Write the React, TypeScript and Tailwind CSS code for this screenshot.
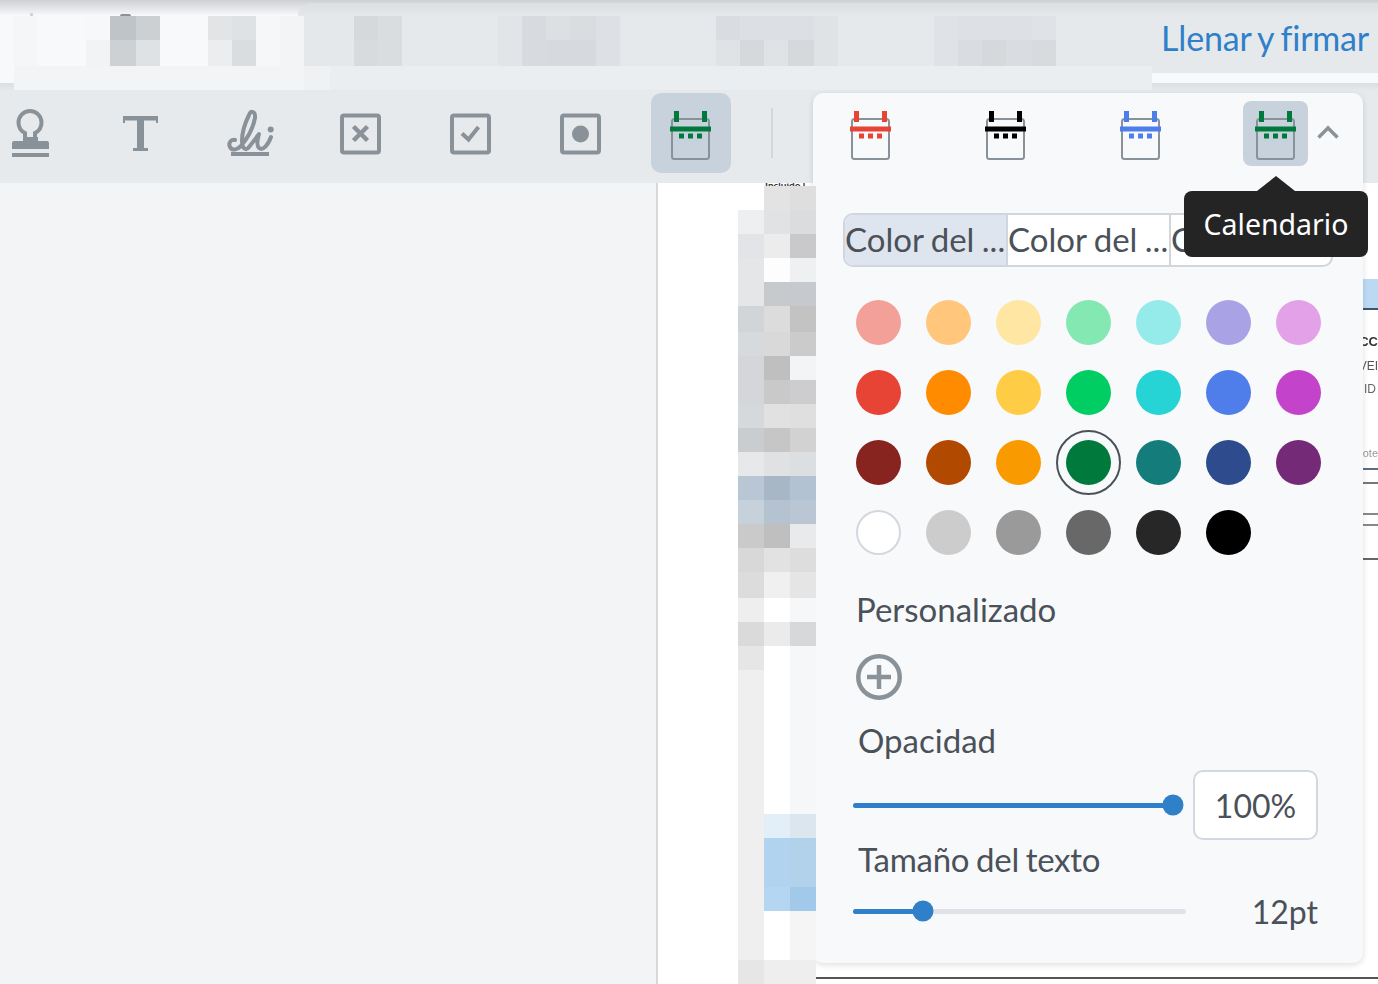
import { Fragment } from "react";

// [width, top row, bottom row] of the blurred header strip
const HEADER_CELLS: [number, string, string][] = [
  [24, "#f5f6f8", "#f5f6f8"],
  [48, "#f8f9fb", "#f8f9fb"],
  [24, "#f7f8f9", "#f2f3f4"],
  [26, "#bfc4c8", "#cdd1d4"],
  [24, "#ccd0d3", "#dfe2e4"],
  [48, "#f8f9fb", "#f8f9fb"],
  [24, "#e3e4e6", "#ecedef"],
  [24, "#dfe2e5", "#dadde0"],
  [24, "#f6f7f9", "#f6f7f9"],
  [24, "#f3f4f6", "#f3f4f6"],
  [50, "#e5e8eb", "#e5e8eb"],
  [24, "#d5d9dc", "#d7dbde"],
  [24, "#d9dde0", "#d9dde0"],
  [96, "#e6e9ec", "#e6e9ec"],
  [24, "#e2e5e8", "#e2e5e8"],
  [24, "#d7dbdf", "#d7dbdf"],
  [24, "#dce0e3", "#d6d9dd"],
  [26, "#dadde0", "#d6d9dd"],
  [24, "#dde0e4", "#dde0e4"],
  [96, "#e6e9ec", "#e6e9ec"],
  [24, "#d9dce0", "#e0e3e6"],
  [24, "#dcdfe3", "#d6d9dc"],
  [24, "#dcdfe3", "#e0e3e6"],
  [26, "#dcdfe3", "#d6d9dc"],
  [24, "#e0e3e6", "#e0e3e6"],
  [96, "#e6e9ec", "#e6e9ec"],
  [24, "#dfe2e6", "#dfe2e6"],
  [24, "#dde0e4", "#d9dce0"],
  [24, "#dde0e4", "#d6d9dc"],
  [26, "#dde0e4", "#d9dce0"],
  [24, "#dfe2e6", "#d8dbde"],
  [96, "#e6e9ec", "#e6e9ec"],
];

// [height, left col, middle col, right col] of the blurred page strip
const PAGE_ROWS: [number, string, string, string][] = [
  [24, "#ffffff", "#e3e3e3", "#dedede"],
  [24, "#eeeff1", "#e1e2e3", "#dadcde"],
  [24, "#e3e4e7", "#ececec", "#c9c9cb"],
  [24, "#e5e6e7", "#fdfdfd", "#eff0f1"],
  [24, "#e5e6e7", "#c6cacd", "#c6cace"],
  [26, "#d2d5d8", "#dcdcdc", "#c3c3c4"],
  [24, "#d7dadd", "#d9d9d9", "#cbcbcc"],
  [24, "#d5d6d9", "#bfbfbf", "#f3f4f5"],
  [24, "#d5d6da", "#c9c9c9", "#cdcdcf"],
  [24, "#d6d9dc", "#e1e1e1", "#dfdfdf"],
  [24, "#cacdd0", "#c6c6c6", "#d2d2d3"],
  [24, "#e7e8ea", "#dfe1e3", "#dcdfe2"],
  [24, "#b9c6d3", "#a8b7c5", "#b2c2d2"],
  [24, "#c6d1dc", "#b5c3d0", "#bac6d4"],
  [24, "#cacaca", "#bfbfbf", "#e9eaeb"],
  [24, "#d8d8d8", "#e2e2e2", "#dcdddc"],
  [26, "#dcdcdc", "#f0f0f0", "#e5e5e6"],
  [24, "#eeeeee", "#ffffff", "#f6f7f8"],
  [24, "#dadada", "#ebebeb", "#d7d8da"],
  [24, "#e6e6e6", "#ffffff", "#f6f7f8"],
  [144, "#efefef", "#ffffff", "#f6f7f8"],
  [24, "#efefef", "#e3eff8", "#dbe6ef"],
  [49, "#efefef", "#b2d3f0", "#b2d1eb"],
  [24, "#efefef", "#b5d6f2", "#a3c9ea"],
  [49, "#efefef", "#ffffff", "#f5f5f5"],
  [24, "#e6e6e6", "#eeeeee", "#eeeeee"],
];

const SWATCHES = [
  ["#f3a098", "#ffc67c", "#ffe6a3", "#84e8b2", "#94ebe9", "#a9a3e5", "#e3a2e7"],
  ["#e74436", "#ff8c00", "#ffcc45", "#00ce63", "#26d3d5", "#4f7de9", "#c344cb"],
  ["#88241f", "#b24900", "#f99b00", "#00793c", "#157c7c", "#2e4c8d", "#752a78"],
  ["#ffffff", "#cccccc", "#9a9a9a", "#686868", "#272727", "#000000"],
];

function CalendarIcon({ color }: { color: string }) {
  return (
    <svg width="41" height="50" viewBox="0 0 41 50" className="mt-[3px] shrink-0">
      <rect x="2" y="9" width="37" height="40" rx="2.5" fill="none" stroke="#8a9299" strokeWidth="2" />
      <rect x="0" y="16.5" width="41" height="5" fill={color} />
      <rect x="4" y="1" width="5" height="11" fill={color} />
      <rect x="32" y="1" width="5" height="11" fill={color} />
      <rect x="9" y="23.5" width="5" height="5" fill={color} />
      <rect x="18" y="23.5" width="5" height="5" fill={color} />
      <rect x="27" y="23.5" width="5" height="5" fill={color} />
    </svg>
  );
}

function ToolIcon({ children }: { children: React.ReactNode }) {
  return (
    <div className="flex h-[80px] w-[80px] shrink-0 items-center justify-center">
      <svg width="48" height="60" viewBox="0 0 48 60" fill="#8a9299">
        {children}
      </svg>
    </div>
  );
}

function BoxFrame({ children }: { children: React.ReactNode }) {
  return (
    <ToolIcon>
      <rect x="5" y="12.5" width="37" height="37" rx="2" fill="none" stroke="#8a9299" strokeWidth="4" />
      {children}
    </ToolIcon>
  );
}

function Slider({ width, fill, thumb }: { width: string; fill: string; thumb: string }) {
  return (
    <div className={`relative h-[5px] rounded-full bg-[#e0e2e8] ${width}`}>
      <div className={`absolute left-0 top-0 h-[5px] rounded-full bg-[#2f80c9] ${fill}`} />
      <div className={`absolute top-1/2 h-[21px] w-[21px] -translate-x-1/2 -translate-y-1/2 rounded-full bg-[#2f80c9] ${thumb}`} />
    </div>
  );
}

export default function App() {
  return (
    <div className="relative h-[984px] w-[1378px] overflow-hidden bg-[#f3f4f6] font-['Lato',sans-serif] text-[#4a5159]">
      {/* Header */}
      <div className="relative flex h-[83px] bg-[linear-gradient(#cfd0d3,#f8f9fb_16px)]">
        <div className="absolute bottom-[10px] left-[298px] right-0 top-[3px] rounded-tl-[12px] bg-[linear-gradient(#dcdfe2,#e6e9ec_14px)]" />
        <div className="absolute left-[30px] top-[13px] h-[3px] w-[3px] bg-[#d0d2d6]" />
        <div className="absolute left-[120px] top-[14px] h-[2px] w-[11px] rounded-t-full bg-[#8a9299]" />
        <div className="relative z-10 ml-[14px] mt-[16px] flex h-[74px] w-[1138px] flex-col">
          <div className="flex h-[50px]">
            {HEADER_CELLS.map(([w, top, bottom], i) => (
              <div key={i} className="flex flex-col" style={{ width: w }}>
                <div className="h-[24px]" style={{ background: top }} />
                <div className="h-[26px]" style={{ background: bottom }} />
              </div>
            ))}
          </div>
          <div className="flex h-[24px]">
            <div className="w-[290px] bg-[#f3f4f6]" />
            <div className="w-[26px] bg-[#f0f1f3]" />
            <div className="flex-1 bg-[#ebeef1]" />
          </div>
        </div>
        <div className="relative flex h-[76px] flex-1 items-center justify-end pr-[9px]">
          <span className="text-[34px] leading-none tracking-[-0.2px] text-[#2f80c9] [word-spacing:-1.500px]">Llenar y firmar</span>
        </div>
      </div>

      {/* Toolbar */}
      <div className="flex h-[100px] items-start bg-[linear-gradient(#dcdfe2,#e7eaed_8px)] pt-[10px]">
        <div className="-ml-[9px] flex gap-[30px]">
          <ToolIcon>
            <g transform="translate(-1 0)">
              <path d="M19 34v-4c-4-2-6.500-6-6.500-10.500a11.500 11.500 0 0 1 23 0c0 4.500-2.500 8.500-6.500 10.500v4" fill="none" stroke="#8a9299" strokeWidth="4" />
              <rect x="17" y="34" width="15" height="4" />
              <path d="M6 40a2 2 0 0 1 2-2h33a2 2 0 0 1 2 2v6H6z" />
              <rect x="6" y="50" width="37" height="4" />
            </g>
          </ToolIcon>
          <ToolIcon>
            <path transform="translate(-1 0)" d="M7 13h35v7h-2v-2.500H28V45h4v3H17v-3h4V17.500H9V20H7z" />
          </ToolIcon>
          <ToolIcon>
            <g transform="translate(-1 0)">
              <path d="M9 37C5 36 2 40 4 44C6 48 11 47 15 43C21 36 27 25 29 15C29.500 8 25 7 23 12C19 20 16 30 16 38C16 46 20 48 23 44C27 39 30 35 33 31C31.500 36 30 42 33 45C37 48 42 42 45 34" fill="none" stroke="#8a9299" strokeWidth="4" strokeLinecap="round" strokeLinejoin="round" />
              <circle cx="44.700" cy="26.500" r="3" />
              <rect x="5" y="49" width="38" height="4" />
            </g>
          </ToolIcon>
          <BoxFrame>
            <path d="M16.500 23.500l14 14M30.500 23.500l-14 14" fill="none" stroke="#8a9299" strokeWidth="4.500" />
          </BoxFrame>
          <BoxFrame>
            <path d="M15 30.500l6.500 6 10-12.500" fill="none" stroke="#8a9299" strokeWidth="4" />
          </BoxFrame>
          <BoxFrame>
            <circle cx="23.500" cy="31" r="8.500" />
          </BoxFrame>
          <div className="flex h-[80px] w-[80px] items-center justify-center rounded-[10px] bg-[#c8d2dd] pr-[1px]">
            <CalendarIcon color="#00793c" />
          </div>
        </div>
        <div className="ml-[40px] mt-[15px] h-[50px] w-[2px] bg-[#d3d7db]" />
      </div>

      {/* Document area */}
      <div className="flex h-[801px]">
        <div className="w-[656px] shrink-0 bg-[#f3f4f6]" />
        <div className="flex flex-1 border-l-2 border-[#d6d8da] bg-white">
          <div className="relative z-20 ml-[80px] w-[78px] shrink-0">
            <div className="h-[3px] overflow-hidden whitespace-nowrap pl-[27px] text-[10px] font-bold leading-[5px] text-[#333333]">
              Incluido l
            </div>
            <div className="grid grid-cols-3">
              {PAGE_ROWS.map(([h, a, b, c], i) => (
                <Fragment key={i}>
                  <div style={{ height: h, background: a }} />
                  <div style={{ height: h, background: b }} />
                  <div style={{ height: h, background: c }} />
                </Fragment>
              ))}
            </div>
          </div>
          <div className="flex flex-1 flex-col overflow-hidden">
            <div className="ml-auto flex h-[794px] w-[15px] flex-col overflow-hidden font-['Liberation_Sans',sans-serif] blur-[0.4px]">
              <div className="mt-[96px] h-[31px] shrink-0 border-b-2 border-[#3d566e] bg-[#bcd9f4]" />
              <div className="mt-[24px] flex h-[16px] shrink-0 items-center justify-end whitespace-nowrap text-[13px] font-bold text-[#333333]">ICC</div>
              <div className="mt-[8px] flex h-[16px] shrink-0 items-center justify-end whitespace-nowrap text-[12px] text-[#555555]">VEI</div>
              <div className="mt-[7px] flex h-[16px] shrink-0 items-center justify-end whitespace-nowrap pr-[2px] text-[12px] text-[#666666]">ID</div>
              <div className="mt-[49px] flex h-[14px] shrink-0 items-center justify-end whitespace-nowrap text-[11px] text-[#999999]">ote</div>
              <div className="mt-[8px] h-[2px] shrink-0 bg-[#5c6f80]" />
              <div className="mt-[12px] h-[2px] shrink-0 bg-[#777777]" />
              <div className="mt-[29px] h-[2px] shrink-0 bg-[#888888]" />
              <div className="mt-[9px] h-[2px] shrink-0 bg-[#888888]" />
              <div className="mt-[32px] h-[2px] shrink-0 bg-[#666666]" />
            </div>
            <div className="h-[2px] shrink-0 bg-[#555555]" />
          </div>
        </div>
      </div>

      {/* Colour panel */}
      <div className="absolute left-[813px] top-[93px] z-10 h-[870px] w-[550px] rounded-[10px] bg-[#f8f9fb] shadow-[0_2px_6px_rgba(0,0,0,0.13)]">
        <div className="flex items-center gap-[70px] pl-[25px] pt-[8px]">
          <div className="flex h-[65px] w-[65px] items-center justify-center">
            <CalendarIcon color="#e74436" />
          </div>
          <div className="flex h-[65px] w-[65px] items-center justify-center">
            <CalendarIcon color="#000000" />
          </div>
          <div className="flex h-[65px] w-[65px] items-center justify-center">
            <CalendarIcon color="#4f7de9" />
          </div>
          <div className="-mr-[61px] flex items-center gap-[9px]">
            <div className="flex h-[65px] w-[65px] items-center justify-center rounded-[8px] bg-[#c8d2dd]">
              <CalendarIcon color="#00793c" />
            </div>
            <svg width="22" height="14" viewBox="0 0 22 14" fill="none" stroke="#8a9299" strokeWidth="3.500" className="-mt-[4px]">
              <path d="M1.500 12.500L11 3l9.500 9.500" />
            </svg>
          </div>
        </div>

        <div className="ml-[30px] mt-[47px] grid h-[54px] w-[490px] grid-cols-[161px_163px_1fr] overflow-hidden rounded-[10px] border-2 border-[#cfd6de] bg-white text-[33px] leading-[48px] [word-spacing:-1px]">
          <div className="overflow-hidden whitespace-nowrap bg-[#dfe5ee]">Color del ...</div>
          <div className="overflow-hidden whitespace-nowrap border-l-2 border-[#cfd6de]">Color del ...</div>
          <div className="overflow-hidden whitespace-nowrap border-l-2 border-[#cfd6de]">Color del ...</div>
        </div>

        <div className="ml-[30px] mt-[20px] grid w-[490px] grid-cols-7">
          {SWATCHES.flat().map((c, i) => (
            <div key={i} className="flex h-[70px] w-[70px] items-center justify-center">
              {i === 17 ? (
                <div className="flex h-[65px] w-[65px] items-center justify-center rounded-full border-2 border-[#4a5159]">
                  <div className="h-[45px] w-[45px] rounded-full" style={{ background: c }} />
                </div>
              ) : i === 21 ? (
                <div className="h-[45px] w-[45px] rounded-full border-2 border-[#d3d7df] bg-white" />
              ) : (
                <div className="h-[45px] w-[45px] rounded-full" style={{ background: c }} />
              )}
            </div>
          ))}
        </div>

        <div className="ml-[43px] mt-[22px] h-[40px] text-[33px] leading-[40px]">Personalizado</div>
        <svg width="46" height="46" viewBox="0 0 46 46" fill="none" stroke="#8a9299" className="ml-[43px] mt-[25px]">
          <circle cx="23" cy="23" r="20.750" strokeWidth="4.500" />
          <path d="M23 11v24M11 23h24" strokeWidth="4.500" />
        </svg>
        <div className="ml-[45px] mt-[20px] h-[40px] text-[33px] leading-[40px]">Opacidad</div>
        <div className="ml-[40px] mt-[10px] flex h-[70px] items-center">
          <Slider width="w-[330px]" fill="w-[320px]" thumb="left-[320px]" />
          <div className="ml-[10px] flex h-[70px] w-[125px] items-center justify-center rounded-[10px] border-2 border-[#d3d7df] bg-white pt-[2px] text-[32px]">
            100%
          </div>
        </div>
        <div className="ml-[45px] -mt-[1px] h-[40px] text-[33px] leading-[40px] tracking-[-0.25px] [word-spacing:-1.500px]">Tamaño del texto</div>
        <div className="ml-[40px] mt-[12px] flex h-[40px] w-[465px] items-center">
          <Slider width="w-[333px]" fill="w-[70px]" thumb="left-[70px]" />
          <div className="flex-1 pt-[1px] text-right text-[32px] leading-[40px]">12pt</div>
        </div>
      </div>

      {/* Tooltip */}
      <div className="absolute left-[1184px] top-[176px] z-30 flex w-[184px] flex-col items-center">
        <div className="h-0 w-0 border-b-[15px] border-l-[19px] border-r-[19px] border-b-[#242424] border-l-transparent border-r-transparent" />
        <div className="flex h-[66px] w-full items-center justify-center rounded-[8px] bg-[#242424] font-['Noto_Sans',sans-serif] text-[28.500px] text-white">
          Calendario
        </div>
      </div>
    </div>
  );
}
